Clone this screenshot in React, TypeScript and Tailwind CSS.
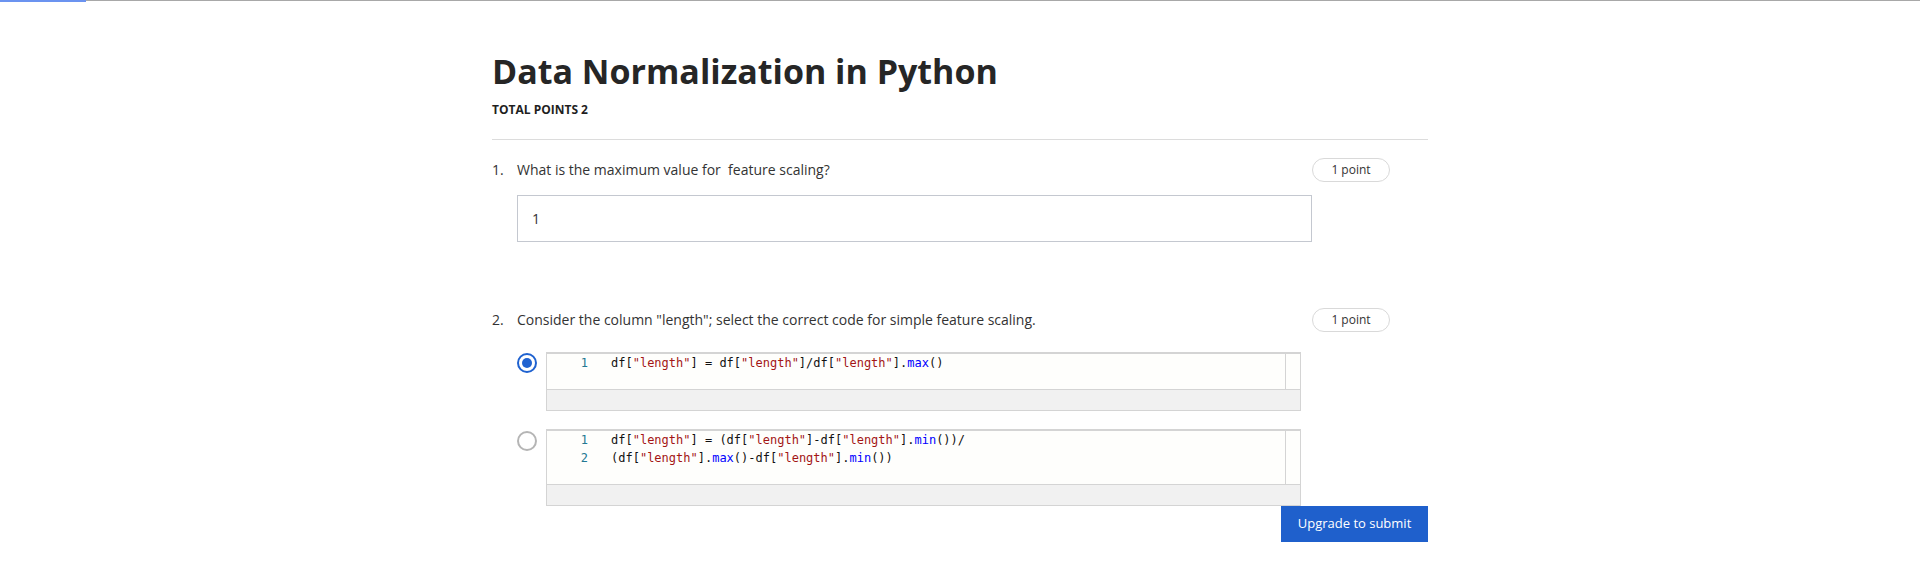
import React from "react";

type Tok = { t: string; c?: "str" | "fn" };

const Q2_OPTIONS: { lines: Tok[][]; selected: boolean }[] = [
  {
    selected: true,
    lines: [
      [
        { t: "df[" },
        { t: '"length"', c: "str" },
        { t: "] = df[" },
        { t: '"length"', c: "str" },
        { t: "]/df[" },
        { t: '"length"', c: "str" },
        { t: "]." },
        { t: "max", c: "fn" },
        { t: "()" },
      ],
    ],
  },
  {
    selected: false,
    lines: [
      [
        { t: "df[" },
        { t: '"length"', c: "str" },
        { t: "] = (df[" },
        { t: '"length"', c: "str" },
        { t: "]-df[" },
        { t: '"length"', c: "str" },
        { t: "]." },
        { t: "min", c: "fn" },
        { t: "())/" },
      ],
      [
        { t: "(df[" },
        { t: '"length"', c: "str" },
        { t: "]." },
        { t: "max", c: "fn" },
        { t: "()-df[" },
        { t: '"length"', c: "str" },
        { t: "]." },
        { t: "min", c: "fn" },
        { t: "())" },
      ],
    ],
  },
];

function PointBadge() {
  return (
    <div className="flex h-[24px] w-[78px] shrink-0 items-center justify-center rounded-full border border-[#d9d9d9] text-[12px] text-[#333]">
      1 point
    </div>
  );
}

function Radio({ checked }: { checked: boolean }) {
  if (checked) {
    return (
      <span className="mt-[1px] flex h-[20px] w-[20px] shrink-0 items-center justify-center rounded-full border-2 border-[#1f62d0]">
        <span className="h-[10px] w-[10px] rounded-full bg-[#1f62d0]" />
      </span>
    );
  }
  return <span className="mt-[2px] h-[20px] w-[20px] shrink-0 rounded-full border-2 border-[#b5b5b5]" />;
}

function CodeBlock({ lines }: { lines: Tok[][] }) {
  return (
    <div className="w-[755px] border border-t-2 border-[#d4d4d4]">
      <div className="flex bg-[#fefefc]">
        <div className="flex-1 pb-[17px] font-['DejaVu_Sans_Mono',monospace] text-[12px] leading-[18px]">
          {lines.map((line, i) => (
            <div key={i} className="flex">
              <span className="w-[41px] text-right text-[#237893]">{i + 1}</span>
              <span className="whitespace-pre pl-[23px] text-[#111]">
                {line.map((tok, j) => (
                  <span
                    key={j}
                    className={
                      tok.c === "str" ? "text-[#a31515]" : tok.c === "fn" ? "text-[#0000ff]" : undefined
                    }
                  >
                    {tok.t}
                  </span>
                ))}
              </span>
            </div>
          ))}
        </div>
        <div className="w-[15px] border-l border-[#d4d4d4]" />
      </div>
      <div className="h-[21px] border-t border-[#d4d4d4] bg-[#f1f1f1]" />
    </div>
  );
}

export default function App() {
  return (
    <div className="min-h-[568px] bg-white font-['Open_Sans',sans-serif] text-[#1f1f1f]">
      <div className="flex items-start">
        <div className="h-[2px] w-[86px] bg-[#6b93f0]" />
        <div className="h-[1px] flex-1 bg-[#a8a8a8]" />
      </div>

      <div className="mx-auto w-[936px]">
        <h1 className="mt-[47px] text-[34px] font-bold leading-[44px] text-[#262626]">
          Data Normalization in Python
        </h1>
        <div className="mt-[9px] text-[12px] font-bold leading-[16px] text-[#1f1f1f]">TOTAL POINTS 2</div>
        <div className="mt-[21px] h-[1px] bg-[#dcdcdc]" />

        {/* question 1 */}
        <div className="mt-[18px] flex w-[898px] items-center">
          <span className="w-[25px] text-[14px] leading-[20px] text-[#333]">1.</span>
          <span className="flex-1 whitespace-pre text-[14px] leading-[20px] text-[#333]">
            What is the maximum value for  feature scaling?
          </span>
          <PointBadge />
        </div>
        <div className="ml-[25px] mt-[13px] flex h-[47px] w-[795px] items-center border border-[#c4c8d0] pl-[14px] text-[14px] text-[#333]">
          1
        </div>

        {/* question 2 */}
        <div className="mt-[66px] flex w-[898px] items-center">
          <span className="w-[25px] text-[14px] leading-[20px] text-[#333]">2.</span>
          <span className="flex-1 text-[14px] leading-[20px] text-[#333]">
            Consider the column "length"; select the correct code for simple feature scaling.
          </span>
          <PointBadge />
        </div>
        <div className="ml-[25px] mt-[20px] flex flex-col gap-[18px]">
          {Q2_OPTIONS.map((opt, i) => (
            <div key={i} className="flex items-start gap-[9px]">
              <Radio checked={opt.selected} />
              <CodeBlock lines={opt.lines} />
            </div>
          ))}
        </div>

        <div className="flex justify-end">
          <button className="h-[36px] w-[147px] bg-[#1f60cc] text-[13px] text-white">Upgrade to submit</button>
        </div>
      </div>
    </div>
  );
}
